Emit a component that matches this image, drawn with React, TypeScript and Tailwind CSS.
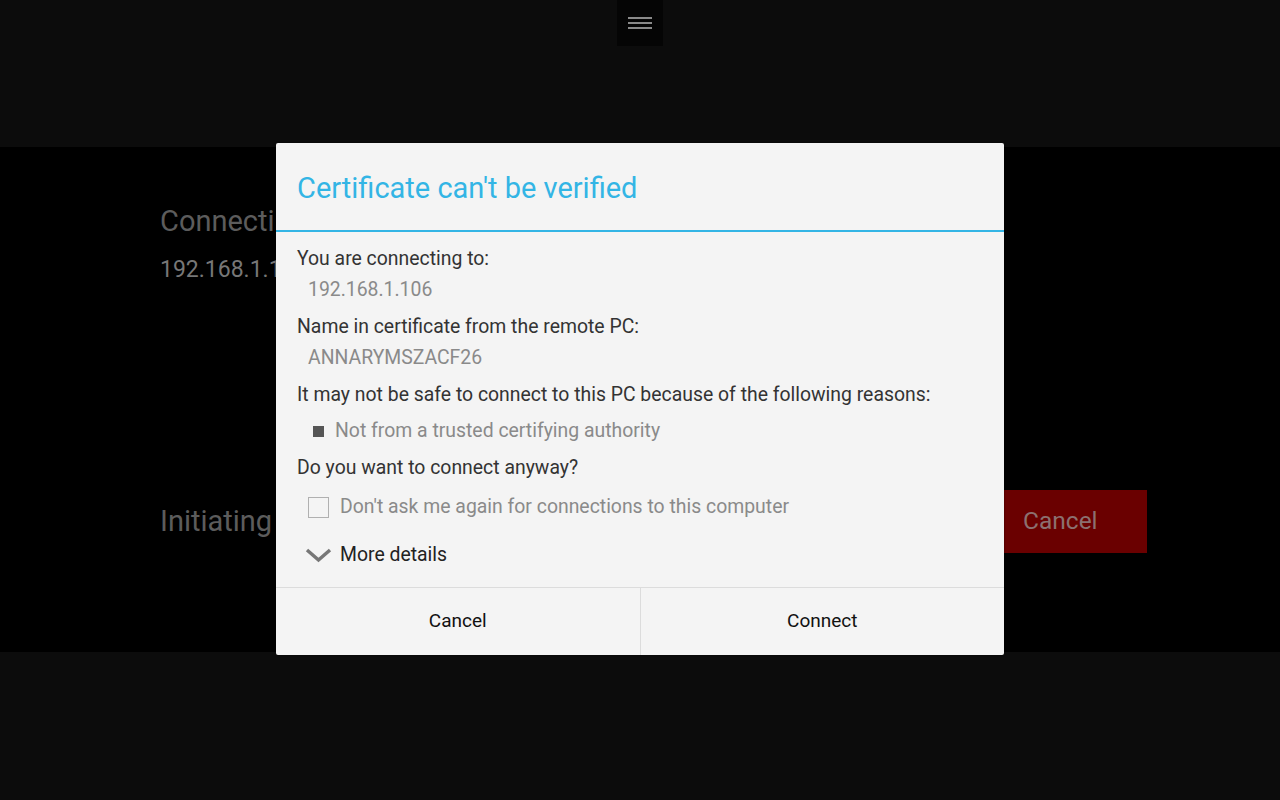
export default function App() {
  return (
    <div className="relative w-[1280px] h-[800px] overflow-hidden bg-[#0c0c0c] font-['Roboto',sans-serif]">
      {/* top bar */}
      <div className="h-[147px] flex justify-center">
        <div className="w-[46px] h-[46px] bg-[#050505] flex flex-col items-center justify-center gap-[3px]">
          <div className="w-6 h-[2px] bg-[#8a8a8a]" />
          <div className="w-6 h-[2px] bg-[#8a8a8a]" />
          <div className="w-6 h-[2px] bg-[#8a8a8a]" />
        </div>
      </div>

      {/* connection panel, mostly covered by the dialog */}
      <div className="h-[505px] bg-black pl-[160px] pr-[133px] pt-[56px] flex flex-col">
        <div className="text-[29px] leading-[36px] text-[#5c5c5c]">Connecting...</div>
        <div className="text-[23px] leading-[30px] text-[#777] mt-[16px]">192.168.1.106</div>
        <div className="flex items-center justify-between mt-[205px]">
          <div className="text-[29px] text-[#5c5c5c]">Initiating</div>
          <div className="w-[143px] h-[63px] bg-[#6a0000] flex items-center pl-[19px] text-[24.5px] text-[#8c7070]">Cancel</div>
        </div>
      </div>

      {/* dialog */}
      <div className="absolute left-[276px] top-[143px] w-[728px] h-[512px] bg-[#f4f4f4] rounded-[2px] flex flex-col shadow-[0_0_2px_rgba(0,0,0,0.6)]">
        <div className="h-[89px] flex items-center px-[21px] border-b-2 border-[#33b5e5]">
          <span className="text-[29px] text-[#33b5e5] pt-[4px]">Certificate can't be verified</span>
        </div>
        <div className="flex-1 px-[21px] pt-[15px] text-[19.4px] text-[#333]">
          <div className="leading-[24px]">You are connecting to:</div>
          <div className="leading-[24px] mt-[7px] pl-[11px] text-[#8a8a8a]">192.168.1.106</div>
          <div className="leading-[24px] mt-[13px]">Name in certificate from the remote PC:</div>
          <div className="leading-[24px] mt-[7px] pl-[11px] text-[#8a8a8a]">ANNARYMSZACF26</div>
          <div className="leading-[24px] mt-[13px]">It may not be safe to connect to this PC because of the following reasons:</div>
          <div className="leading-[24px] mt-[12px] pl-[16px] flex items-center gap-[11px] text-[#8a8a8a]">
            <span className="w-[11px] h-[11px] bg-[#555]" />
            <span>Not from a trusted certifying authority</span>
          </div>
          <div className="leading-[24px] mt-[13px]">Do you want to connect anyway?</div>
          <div className="leading-[24px] mt-[15px] pl-[11px] flex items-center gap-[11px] text-[#8a8a8a]">
            <span className="w-[21px] h-[21px] border-[1.5px] border-[#b0b0b0]" />
            <span>Don't ask me again for connections to this computer</span>
          </div>
          <div className="mt-[24px] pl-[8px] flex items-center gap-[8px] text-[#222]">
            <svg width="27" height="16" viewBox="0 0 27 16">
              <polyline points="2,3 13.5,13 25,3" fill="none" stroke="#777" strokeWidth="3.5" />
            </svg>
            <span className="leading-[24px]">More details</span>
          </div>
        </div>
        <div className="h-[68px] border-t border-[#dcdcdc] flex text-[19px] text-[#111]">
          <div className="flex-1 flex items-center justify-center border-r border-[#dcdcdc]">Cancel</div>
          <div className="flex-1 flex items-center justify-center">Connect</div>
        </div>
      </div>
    </div>
  );
}
